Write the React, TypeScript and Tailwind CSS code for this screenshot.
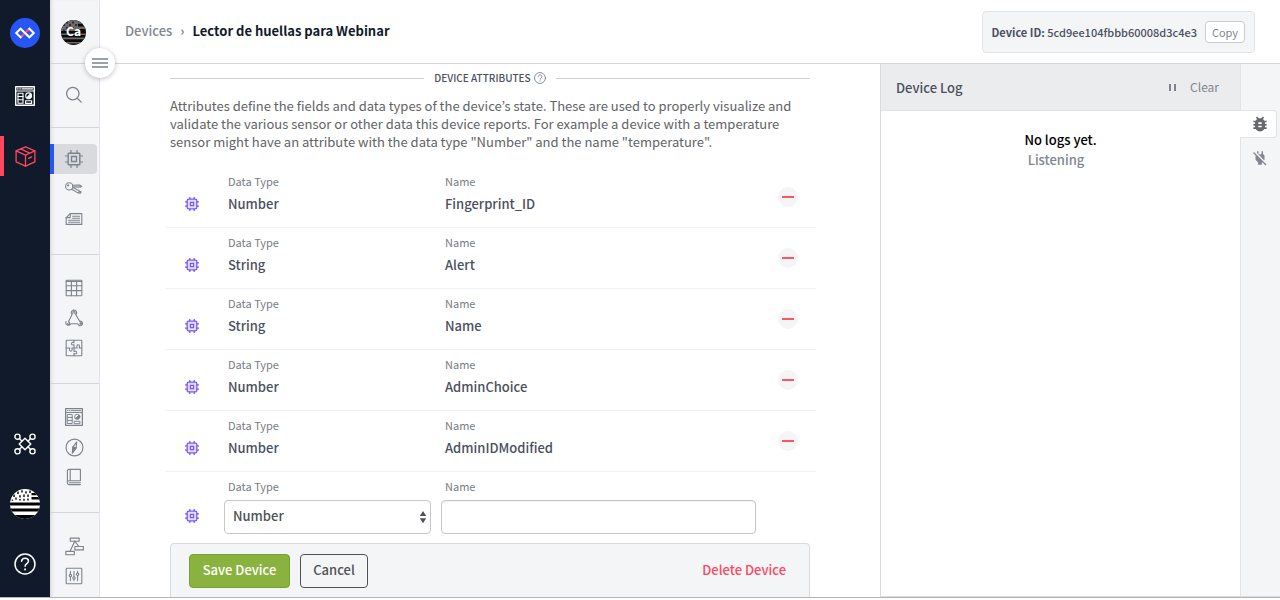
import React, { useId } from "react";
import type { ReactNode } from "react";
import { MdBugReport, MdPowerOff } from "react-icons/md";

/* ---------- icons ---------- */

type IconProps = { className?: string };

function LineIcon({ className = "size-[18px]", box = 18, children }: IconProps & { box?: number; children: ReactNode }) {
  return (
    <svg viewBox={`0 0 ${box} ${box}`} className={className} fill="none" stroke="currentColor" strokeWidth="1.1" strokeLinejoin="round" strokeLinecap="round" aria-hidden="true">
      {children}
    </svg>
  );
}

const LogoIcon = () => (
  <svg viewBox="0 0 30 30" className="size-[30px]" fill="none" aria-hidden="true">
    <circle cx="15" cy="15" r="15" fill="#2656f6" />
    <path d="M16.800 16.700l2.600 2.600 4.400-4.300-4.400-4.300-2.300 2.200" stroke="#fff" strokeWidth="2" />
    <path d="M13.200 13.300l-2.600-2.600L6.200 15l4.400 4.300 2.300-2.200" stroke="#fff" strokeWidth="2" />
    <path d="M11.400 18.500l7.200-7" stroke="#ff4760" strokeWidth="2" />
    <path d="M12.400 12.500l5.200 5" stroke="#fff" strokeWidth="2" />
  </svg>
);

const DashboardIcon = ({ className = "size-[18px]" }: IconProps) => (
  <LineIcon className={className} box={20}>
    <rect x="0.7" y="0.7" width="18.6" height="18.6" strokeWidth="1.4" />
    <path d="M0.7 5h18.600M2.600 2.900h.6M4.800 2.900h.6M7 2.900h10.500" />
    <rect x="3" y="7.200" width="5" height="10" />
    <path d="M3 10.500h5M3 13.800h5" />
    <circle cx="13.600" cy="9.800" r="2.900" />
    <path d="M13.600 9.800l2-2 .8 2.600-1.800 1.600-2.400-.4z" fill="currentColor" />
    <rect x="10.600" y="14.800" width="6" height="2.600" />
  </LineIcon>
);

const BoxIcon = () => (
  <LineIcon className="size-[21px]" box={21}>
    <g strokeWidth="1.300">
      <path d="M10.500 0.800l9.400 4v11l-9.400 4.400-9.400-4.400v-11z" />
      <path d="M1.100 4.900l9.400 4.300 9.400-4.300M10.500 9.200v11M5.600 2.900l9.200 4.300M13.600 12.400l3-1.500" />
    </g>
  </LineIcon>
);

const NetworkIcon = () => (
  <LineIcon className="size-[22px]" box={22}>
    <g strokeWidth="1.400">
      <path d="M11 5.200l5.800 5.800-5.800 5.800L5.200 11z" />
      <circle cx="3.500" cy="3.700" r="2.600" />
      <circle cx="18.500" cy="3.700" r="2.600" />
      <circle cx="3.500" cy="18.300" r="2.600" />
      <circle cx="18.500" cy="18.300" r="2.600" />
      <path d="M5.400 5.500l2.400 2.400M16.600 5.500l-2.400 2.400M5.400 16.500l2.400-2.400M16.600 16.500l-2.400-2.400" />
    </g>
  </LineIcon>
);

const HelpIcon = ({ className }: IconProps) => (
  <LineIcon className={className} box={22}>
    <circle cx="11" cy="11" r="10" strokeWidth="1.500" />
    <path d="M7.600 8.200c.2-1.900 1.600-2.900 3.500-2.900s3.400 1.100 3.400 2.800c0 2.600-3.400 2.400-3.400 5.200" strokeWidth="1.500" />
    <path d="M11.100 16.200v.3" strokeWidth="1.800" />
  </LineIcon>
);

function Flag({ className }: IconProps) {
  const id = useId();
  return (
    <svg viewBox="0 0 30 30" className={className} aria-hidden="true">
      <clipPath id={id}>
        <circle cx="15" cy="15" r="15" />
      </clipPath>
      <g clipPath={`url(#${id})`}>
        <path fill="#fff" d="M0 0h30v30H0z" />
        <path fill="#000" d="M21.500 4h9v2.200h-9zM21.500 8h9v2.600h-9zM0 13.400h30v3.200H0zM0 19.600h30v2.800H0zM0 26h30v4H0z" />
        <path d="M4 5.500v2.400M8 2.600V5M12 1.200v2.400M16 2.200v2.400M20 1.600V4M6 8.400v2.400M10 6.200v2.400M14 5.600V8M18 5.600V8M10 10v1.600M14 9.800v2M18 9.600v2M2.400 10.400v1.400" stroke="#000" strokeWidth="1.400" />
      </g>
    </svg>
  );
}

function Avatar() {
  const id = useId();
  return (
    <svg viewBox="0 0 25 25" className="size-[25px]" role="img" aria-label="Application">
      <clipPath id={id}>
        <circle cx="12.500" cy="12.500" r="12.500" />
      </clipPath>
      <g clipPath={`url(#${id})`}>
        <path fill="#0a0a0a" d="M0 0h25v25H0z" />
        <path fill="#6b6b6b" d="M0 0h17v11H0zM17 1.400h8v2.400h-8zM17 6.600h8v2.400h-8zM0 13.400h25v1.600H0zM0 17.600h25v1.700H0zM0 22h25v1.500H0z" />
        <path d="M3 4v2M6 1.600v2M9 4v2M12 1.400v2M15 4v2M6 7v2M3 9.400v1.400M12 7v1" stroke="#0a0a0a" strokeWidth="1.200" />
        <text x="12.500" y="16.400" textAnchor="middle" fill="#fff" fontSize="12" fontWeight="700">
          Ca
        </text>
      </g>
    </svg>
  );
}

const SearchIcon = () => (
  <LineIcon className="size-[18px]">
    <circle cx="7.800" cy="7.600" r="6.200" strokeWidth="1.300" />
    <path d="M12.300 12.200l3.900 3.900" strokeWidth="1.300" />
  </LineIcon>
);

const ChipIcon = () => (
  <LineIcon className="size-[18px]">
    <rect x="3.200" y="3.200" width="11.600" height="11.600" rx="0.600" strokeWidth="1.400" />
    <rect x="6.500" y="6.500" width="5" height="5" strokeWidth="1.300" />
    <path d="M6 3V.4M12 3V.4M6 17.600V15M12 17.600V15M3 6H.4M3 12H.4M17.600 6H15M17.600 12H15" strokeWidth="1.200" />
  </LineIcon>
);

const KeysIcon = () => (
  <LineIcon>
    <circle cx="4.200" cy="6.400" r="3.600" />
    <circle cx="3.200" cy="5.400" r="0.500" />
    <path d="M7.600 5.200l7-.2 2 1.200-1.400 1-1-.5-1 .6-1.200-.5-4.200.3M6.800 9.200l5.600 3.400 3 .5.7-1.200-2.200-.5.2-1.100-1.500-.3-4.800-2.700" />
  </LineIcon>
);

const NewsIcon = () => (
  <LineIcon>
    <path d="M5.200 3.600h11.600v10.800H1.200V7.600z" />
    <path d="M5.200 3.600v4h-4" />
    <path d="M7.600 6.200h7M7.600 8.200h7M3.600 10.200h11M3.600 12.200h11" />
  </LineIcon>
);

const TableIcon = () => (
  <LineIcon>
    <rect x="1.200" y="1.200" width="15.600" height="15.600" rx="0.600" />
    <path d="M1.200 2.400h15.600M1.200 6.800h15.600M1.200 11.600h15.600M6.400 2v14.800M11.600 2v14.800" />
  </LineIcon>
);

const WebhookIcon = () => (
  <LineIcon>
    <path d="M6.400 4.600a2.700 2.700 0 1 1 5.100.2M8 4.200a1.100 1.100 0 1 1 1.800.3M7.300 5L3.700 12.200M10.400 5l4.300 7.200" />
    <path d="M3.100 12.100M1 12.600a2.500 2.500 0 1 0 4.700 2.200h7.200M2.400 14.600a1.100 1.100 0 1 0 1.200-1.500l.1-.9M12.900 14.800a2.300 2.300 0 1 0 1.800-2.600M15 14.900a.8.800 0 1 0 .1-1" />
  </LineIcon>
);

const PuzzleIcon = () => (
  <LineIcon>
    <rect x="1.200" y="1.200" width="15.600" height="15.600" rx="0.600" />
    <path d="M9 1.200v2.600c-.6-.7-2.800-.4-2.600 1s2 1.400 2.600.8V9H6.800c.7 1.400.3 3.200-1 3.200S4 10.400 4.800 9H1.200M9 9h3.200c-.8-1.400-.2-3.200 1-3.200s1.800 1.800 1 3.200h2.600M9 9v3.400c1.200-.6 2.800-.2 2.800 1s-1.600 1.800-2.800 1v2.400" />
  </LineIcon>
);

const CompassIcon = () => (
  <LineIcon className="size-[19px]">
    <circle cx="9" cy="9" r="8" />
    <path d="M11 3.800l-.4 5.600L7 14.200l.4-5.600z" />
    <path d="M7.400 8.600l3.200.8L7 14.200z" fill="currentColor" />
  </LineIcon>
);

const BookIcon = () => (
  <LineIcon>
    <path d="M4 1.400h11.400v11.400H4.200c-2.600 0-2.600 3.800 0 3.800h11.200M2.400 14V3c0-1 .6-1.600 1.600-1.600M5.200 1.400v11.400M15.400 14.700H4.400" />
  </LineIcon>
);

const FlowIcon = () => (
  <LineIcon className="size-[19px]">
    <rect x="5" y="1" width="8.400" height="3" />
    <rect x="9.400" y="9" width="8" height="3.200" />
    <rect x="0.800" y="13.600" width="8" height="3.200" />
    <path d="M9.200 4L4.800 13.600M9.200 4l4 5" />
  </LineIcon>
);

const SlidersIcon = () => (
  <LineIcon>
    <rect x="1.200" y="1.200" width="15.600" height="15.600" rx="0.800" />
    <path d="M5.400 4.400v2.800M5.400 10v3.600M9 4.400v5.200M9 12.400v1.200M12.600 4.400v1.400M12.600 8.600v5" />
    <circle cx="5.400" cy="8.600" r="1.200" />
    <circle cx="9" cy="11" r="1.200" />
    <circle cx="12.600" cy="7.200" r="1.200" />
  </LineIcon>
);

const AttributeIcon = () => (
  <svg viewBox="0 0 14 14" className="size-3.5" fill="none" stroke="#7a55f5" aria-hidden="true">
    <rect x="2.200" y="2.200" width="9.600" height="9.600" rx="1.400" fill="#e4dcfd" strokeWidth="1.300" />
    <rect x="5.400" y="5.400" width="3.200" height="3.200" strokeWidth="1.200" />
    <path d="M4.800 0v2M9.200 0v2M4.800 12v2M9.200 12v2M0 4.800h2M0 9.200h2M12 4.800h2M12 9.200h2" strokeWidth="1.300" />
  </svg>
);

/* ---------- navigation ---------- */

function RailLink({ label, active, children }: { label: string; active?: boolean; children: ReactNode }) {
  return (
    <a
      href="#"
      aria-label={label}
      className={
        active
          ? "flex h-10 items-center justify-center border-x-4 border-l-[#ff4760] border-r-transparent text-[#ff4760]"
          : "flex h-10 items-center justify-center text-white"
      }
    >
      {children}
    </a>
  );
}

function PrimaryRail() {
  return (
    <nav aria-label="Main" className="flex w-[50px] shrink-0 flex-col bg-[#111a2a] pt-[13px] pb-[13px]">
      <RailLink label="Home"><LogoIcon /></RailLink>
      <div className="mt-[23px] flex flex-col gap-5">
        <RailLink label="Dashboards"><DashboardIcon className="size-5" /></RailLink>
        <RailLink label="Applications" active><BoxIcon /></RailLink>
      </div>
      <div className="mt-auto flex flex-col gap-5">
        <RailLink label="Edge"><NetworkIcon /></RailLink>
        <RailLink label="Account"><Flag className="size-[30px]" /></RailLink>
        <RailLink label="Help"><HelpIcon className="size-[22px]" /></RailLink>
      </div>
    </nav>
  );
}

function SideLink({ label, active, children }: { label: string; active?: boolean; children: ReactNode }) {
  return (
    <a
      href="#"
      aria-label={label}
      className={
        active
          ? "mr-[2px] flex h-[30px] items-center justify-center rounded-r border-l-4 border-[#2656f6] bg-[#d8dade] pr-[3px] text-[#7d838c]"
          : "flex h-[30px] items-center justify-center pr-[1px] text-[#7d838c]"
      }
    >
      {children}
    </a>
  );
}

function SecondaryRail() {
  return (
    <nav
      aria-label="Application"
      className="flex w-[50px] shrink-0 flex-col border-r border-[#e2e3e6] bg-[#f4f5f7] shadow-[inset_4px_0_4px_-3px_rgba(0,0,0,0.15)]"
    >
      <a href="#" className="flex h-16 items-center justify-center border-b border-[#d4d5d8] pt-px pr-[2px]">
        <Avatar />
      </a>
      <button type="button" aria-label="Search" className="flex h-16 items-center justify-center border-b border-[#d4d5d8] pr-[1px] pb-px text-[#7d838c]">
        <SearchIcon />
      </button>
      <div className="border-b border-[#d4d5d8] pt-4 pb-5">
        <SideLink label="Devices" active><ChipIcon /></SideLink>
        <SideLink label="Access keys"><KeysIcon /></SideLink>
        <SideLink label="Device recipes"><NewsIcon /></SideLink>
      </div>
      <div className="border-b border-[#d4d5d8] pt-[18px] pb-5">
        <SideLink label="Data tables"><TableIcon /></SideLink>
        <SideLink label="Webhooks"><WebhookIcon /></SideLink>
        <SideLink label="Integrations"><PuzzleIcon /></SideLink>
      </div>
      <div className="border-b border-[#d4d5d8] pt-[18px] pb-5">
        <SideLink label="Dashboards"><DashboardIcon /></SideLink>
        <SideLink label="Experience"><CompassIcon /></SideLink>
        <SideLink label="Notebooks"><BookIcon /></SideLink>
      </div>
      <div className="pt-[18px]">
        <SideLink label="Workflows"><FlowIcon /></SideLink>
        <SideLink label="Settings"><SlidersIcon /></SideLink>
      </div>
    </nav>
  );
}

/* ---------- page header ---------- */

function PageHeader() {
  return (
    <header className="relative flex h-16 shrink-0 items-center justify-between border-b border-[#d4d5d8] px-[25px]">
      <button
        type="button"
        aria-label="Toggle menu"
        className="absolute -bottom-[15px] -left-[15px] flex size-[30px] items-center justify-center rounded-full bg-white shadow-[0_1px_5px_rgba(0,0,0,0.25)]"
      >
        <svg viewBox="0 0 16 12" className="h-3 w-4" stroke="#7b828c" strokeWidth="1.500" aria-hidden="true">
          <path d="M0 2h16M0 6h16M0 10h16" />
        </svg>
      </button>
      <nav aria-label="Breadcrumb" className="flex items-center gap-2 pb-[2px] text-[13px] leading-5">
        <a href="#" className="font-medium text-[#82868f]">Devices</a>
        <span aria-hidden="true" className="font-bold text-[#82868f]">›</span>
        <span className="font-bold text-[#111a2a]">Lector de huellas para Webinar</span>
      </nav>
      <div className="flex h-[42px] items-center gap-2 rounded border border-[#e2e3e6] bg-[#f4f5f7] px-[9px] text-[#4a5060]">
        <span className="text-[11px] leading-5 font-medium"><b className="font-bold">Device ID:</b> 5cd9ee104fbbb60008d3c4e3</span>
        <button type="button" className="flex h-[22px] w-10 items-center justify-center rounded border border-[#cbccd0] bg-white text-[11px] leading-5 text-[#82868f]">Copy</button>
      </div>
    </header>
  );
}

/* ---------- attributes ---------- */

const attributes = [
  { type: "Number", name: "Fingerprint_ID" },
  { type: "String", name: "Alert" },
  { type: "String", name: "Name" },
  { type: "Number", name: "AdminChoice" },
  { type: "Number", name: "AdminIDModified" },
];

function AttributeRow({ type, name }: { type: string; name: string }) {
  return (
    <li className="grid h-[61px] grid-cols-[59px_207px_1fr_60px] border-b border-[#f1f2f3]">
      <span className="pt-[30px] pl-5"><AttributeIcon /></span>
      <span className="pt-1.5 pl-1">
        <span className="block text-[11px] leading-4 text-[#777b84]">Data Type</span>
        <span className="mt-[5px] block text-[13px] leading-5 font-medium text-[#4a5060]">{type}</span>
      </span>
      <span className="pt-1.5 pl-3.5">
        <span className="block text-[11px] leading-4 text-[#777b84]">Name</span>
        <span className="mt-[5px] block text-[13px] leading-5 font-medium text-[#4a5060]">{name}</span>
      </span>
      <button type="button" aria-label={`Remove ${name}`} className="mt-5 ml-[22px] flex size-5 items-center justify-center rounded-full bg-[#f4f5f7]">
        <span className="h-[2px] w-3 bg-[#ff5560]" />
      </button>
    </li>
  );
}

function NewAttribute() {
  return (
    <div className="grid grid-cols-[59px_207px_1fr_60px] pt-1.5">
      <span className="pt-[31px] pl-5"><AttributeIcon /></span>
      <span>
        <label htmlFor="attribute-type" className="block pl-1 text-[11px] leading-4 text-[#777b84]">Data Type</label>
        <span className="mt-1.5 grid items-center">
          <select id="attribute-type" className="col-start-1 row-start-1 h-[34px] w-full appearance-none rounded border border-[#c6c7cb] bg-white px-2 pb-[2px] text-[13px] leading-5 font-medium text-[#4f5154]">
            <option>Number</option>
            <option>String</option>
            <option>Boolean</option>
          </select>
          <svg viewBox="0 0 8 14" className="pointer-events-none col-start-1 row-start-1 mr-1 h-3.5 w-2 justify-self-end" fill="#4f5154" aria-hidden="true">
            <path d="M4 1l3.200 5H.8zM4 13.300L.8 8.300h6.400z" />
          </svg>
        </span>
      </span>
      <span className="pl-2.5">
        <label htmlFor="attribute-name" className="block pl-1 text-[11px] leading-4 text-[#777b84]">Name</label>
        <input id="attribute-name" type="text" className="mt-1.5 block h-[34px] w-full rounded border border-[#c6c7cb] bg-white px-2 text-[13px] shadow-[inset_0_1px_1px_rgba(0,0,0,0.06)]" />
      </span>
    </div>
  );
}

function AttributesForm() {
  return (
    <main className="min-w-0 flex-1 overflow-hidden pr-16 pl-[65px]">
      <form className="mx-auto flex h-full max-w-[652px] flex-col" onSubmit={(e) => e.preventDefault()}>
        <div className="mt-1 flex items-center gap-2.5 pr-1.5 pl-[5px]">
          <span className="h-px flex-1 bg-[#cfd0d3]" />
          <h2 className="flex items-center gap-[3px] text-[10px] leading-5 font-medium text-[#4a5060]">
            DEVICE ATTRIBUTES <HelpIcon className="size-3 text-[#6d7581]" />
          </h2>
          <span className="h-px flex-1 bg-[#cfd0d3]" />
        </div>
        <p className="mt-[9px] pl-[5px] text-[13px] leading-[18px] text-[#616366]">
          Attributes define the fields and data types of the device’s state. These are used to properly visualize and
          validate the various sensor or other data this device reports. For example a device with a temperature sensor
          might have an attribute with the data type "Number" and the name "temperature".
        </p>
        <ul className="mt-4">
          {attributes.map((a) => (
            <AttributeRow key={a.name} type={a.type} name={a.name} />
          ))}
        </ul>
        <NewAttribute />
        <div className="mt-[9px] mr-1.5 ml-[5px] flex flex-1 items-start gap-2.5 rounded-t border border-b-0 border-[#dadbde] bg-[#f4f5f7] px-[18px] pt-2.5 text-[13px] leading-5 font-medium">
          <button type="submit" className="h-[34px] w-[101px] rounded border border-[#7aa030] bg-[#8ab23f] pb-[2px] text-white">Save Device</button>
          <button type="button" className="h-[34px] w-[68px] rounded border border-[#4f5154] pb-[2px] text-[#4f5154]">Cancel</button>
          <button type="button" className="ml-auto h-[34px] px-[5px] pb-[2px] text-[#ff4760]">Delete Device</button>
        </div>
      </form>
    </main>
  );
}

/* ---------- log panel ---------- */

function LogPanel() {
  return (
    <aside className="flex w-[400px] shrink-0 border-b border-l border-[#dadbde]">
      <section className="flex-1">
        <div className="flex h-[47px] items-center border-b border-[#e2e3e6] bg-[#ebecee] pr-[21px] pl-[15px]">
          <h2 className="pt-[2px] text-[13px] leading-5 font-medium text-[#4a5060]">Device Log</h2>
          <button type="button" aria-label="Pause" className="ml-auto flex gap-[3px] p-1">
            <span className="h-[7px] w-[2px] bg-[#7d838c]" />
            <span className="h-[7px] w-[2px] bg-[#7d838c]" />
          </button>
          <button type="button" className="ml-2.5 text-xs leading-5 text-[#82868f]">Clear</button>
        </div>
        <div className="pt-[19px] text-center text-[13px] leading-5 font-medium">
          <p className="text-black">No logs yet.</p>
          <p className="pr-[9px] text-[#82868f]">Listening</p>
        </div>
      </section>
      <div className="w-10 border-l border-[#e2e3e6] bg-[#f4f5f7] pt-[46px]">
        <button type="button" aria-label="Log" className="-ml-px flex h-7 w-[37px] items-center justify-center rounded-r border border-l-0 border-[#e2e3e6] bg-white pl-[3px] text-[#66686b]">
          <MdBugReport className="size-5" />
        </button>
        <button type="button" aria-label="Connections" className="mt-1.5 flex h-7 w-9 items-center justify-center pl-[2px] text-[#82868f]">
          <MdPowerOff className="size-[18px]" />
        </button>
      </div>
    </aside>
  );
}

export default function App() {
  return (
    <div className="h-screen bg-white pb-[2px] font-['Noto_Sans_CJK_JP','Noto_Sans',sans-serif]">
      <div className="flex h-full overflow-hidden border-b border-[#b4b5b8]">
        <PrimaryRail />
        <SecondaryRail />
        <div className="flex min-w-0 flex-1 flex-col">
          <PageHeader />
          <div className="flex min-h-0 flex-1">
            <AttributesForm />
            <LogPanel />
          </div>
        </div>
      </div>
    </div>
  );
}
